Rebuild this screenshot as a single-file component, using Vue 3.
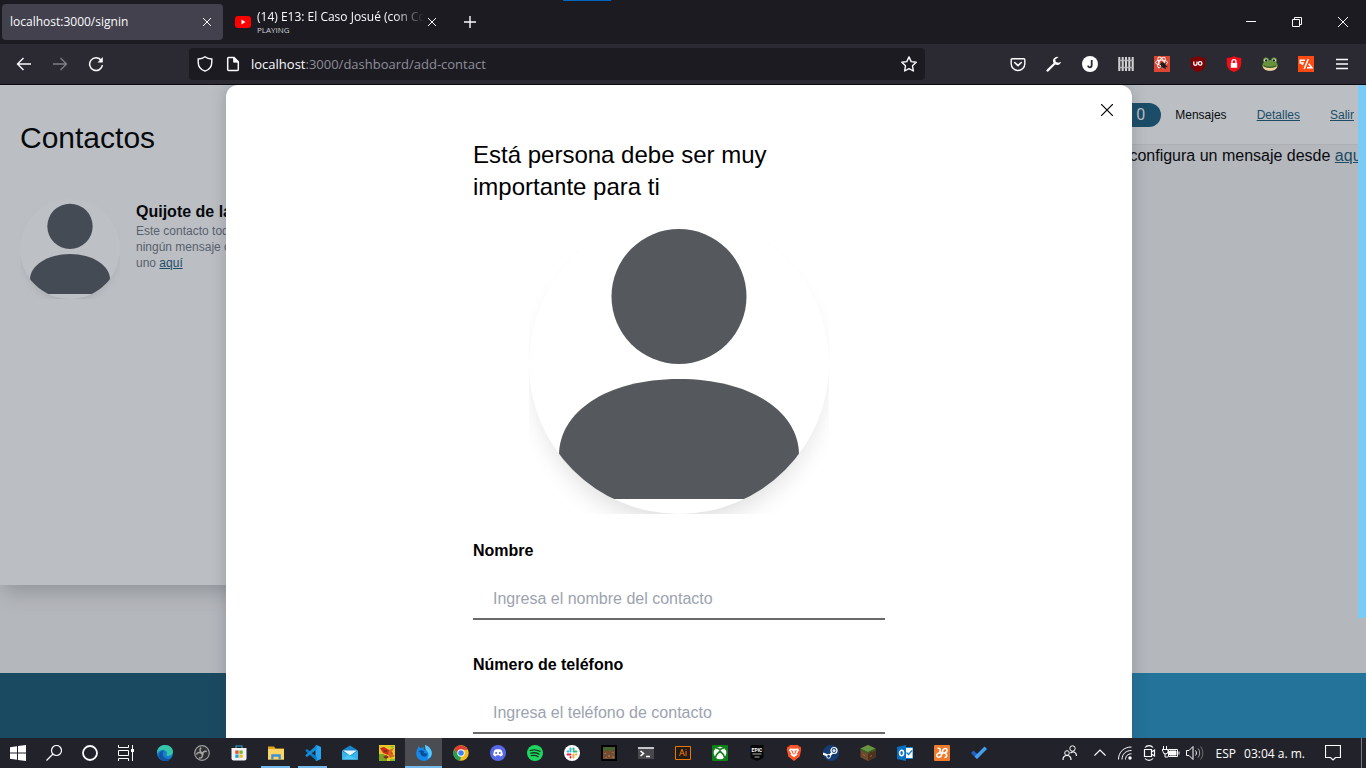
<script setup>
import { ref } from 'vue'

const contactName = ref('')
const contactPhone = ref('')
const address = ref('localhost:3000/dashboard/add-contact')

const extensions = [
  { name: 'Pocket', art: '<path d="M2.2 2.7h11.6a1 1 0 0 1 1 1v4a6.8 6.8 0 0 1-13.6 0v-4a1 1 0 0 1 1-1z" fill="none" stroke="#fbfbfe" stroke-width="1.4"/><path d="M4.7 6.5 8 9.6l3.3-3.1" fill="none" stroke="#fbfbfe" stroke-width="1.6" stroke-linecap="round" stroke-linejoin="round"/>' },
  { name: 'Herramientas', art: '<path d="M1.5 14.6 8.2 8" stroke="#fbfbfe" stroke-width="2.2" stroke-linecap="round"/><path d="M12.6 1.1a4.1 4.1 0 1 0 2.5 4.7l-2.5 1-2.7-.7-.7-2.5z" fill="#fbfbfe"/>' },
  { name: 'Perfil', art: '<circle cx="8" cy="8" r="8" fill="#fff"/><path d="M9.7 4v5.2c0 2.6-3.4 2.8-3.7.4" fill="none" stroke="#2b2a33" stroke-width="1.8"/>' },
  { name: 'Valla', art: '<path d="M1.3 1v14M4.7 1v14M8 1v14M11.3 1v14M14.7 1v14" stroke="#d4d4d7" stroke-width="2"/><path d="M0 4.5h16M0 11.500h16" stroke="#b4b4b8" stroke-width="1.400"/>' },
  { name: 'React Developer Tools', art: '<path fill="#dc4633" d="M0 0h16v16H0z"/><g fill="none" stroke="#fff" stroke-width=".9"><ellipse cx="7.5" cy="6.500" rx="6" ry="2.400"/><ellipse cx="7.500" cy="6.500" rx="6" ry="2.400" transform="rotate(60 7.500 6.500)"/><ellipse cx="7.500" cy="6.500" rx="6" ry="2.400" transform="rotate(120 7.500 6.500)"/></g><ellipse cx="9.400" cy="9.400" rx="2.300" ry="3.200" fill="#241a1a" transform="rotate(-35 9.400 9.400)"/><path d="m5.400 8 8 2.800M6.400 12l5.900-4.800M7.200 6.500l4.400 6.500" stroke="#241a1a"/>' },
  { name: 'uBlock', art: '<path d="M8 0C6 1.400 3.600 1.900.8 1.900v5.500c0 4.400 3.200 7.200 7.200 8.600 4-1.400 7.200-4.200 7.200-8.600V1.900C12.400 1.900 10 1.400 8 0z" fill="#800000"/><path d="M3.800 5.500v2.400c0 1.800 3.200 1.800 3.200 0V5.500" fill="none" stroke="#fff" stroke-width="1.300"/><circle cx="10.200" cy="7.400" r="1.800" fill="none" stroke="#fff" stroke-width="1.300"/>' },
  { name: 'Protección', art: '<path d="M8 0C6 1.400 3.600 1.900.8 1.900v5.500c0 4.400 3.200 7.200 7.200 8.600 4-1.400 7.200-4.200 7.200-8.600V1.900C12.400 1.900 10 1.400 8 0z" fill="#f00d18"/><rect x="4.800" y="7" width="6.400" height="4.800" rx=".6" fill="#fff"/><path d="M6 7.500V5.700a2 2 0 0 1 4 0v1.800" fill="none" stroke="#fff" stroke-width="1.300"/>' },
  { name: 'Rana', art: '<ellipse cx="8" cy="9.300" rx="7.700" ry="5.200" fill="#65933a"/><circle cx="4" cy="4.300" r="2.900" fill="#65933a"/><circle cx="12" cy="4.300" r="2.900" fill="#65933a"/><path d="M.7 10.200c3.200 2.400 11.400 2.400 14.600 0-.7 6.200-13.900 6.200-14.600 0z" fill="#f2d1a3"/><circle cx="4" cy="4.300" r="1.800" fill="#e9f5e5"/><circle cx="12" cy="4.300" r="1.800" fill="#e9f5e5"/><circle cx="4.200" cy="4.500" r="1.200" fill="#151a12"/><circle cx="11.800" cy="4.500" r="1.200" fill="#151a12"/><path d="M2 9.700c3 2.100 9 2.100 12 0" fill="none" stroke="#334f20"/>' },
  { name: 'Código', art: '<path fill="#ff4a12" d="M0 0h16v16H0z"/><path d="M7 4.300H2.300V7H5L4.200 9M10.300 3 6.200 13M9 11.700h4.800L10.700 7.800" fill="none" stroke="#fff" stroke-width="1.600"/>' }
]

const apps = [
  { name: 'Microsoft Edge', art: '<circle cx="8" cy="8" r="8" fill="#1680cf"/><path d="M.1 7C.6 2.700 4 .1 8.200.1c4.500 0 7.700 3 7.700 6.500 0 3-2.300 4.300-4.800 4.300-1.900 0-2.100-.9-1.400-1.700C10.700 7.600 9 5.100 6 5.100 3.300 5.100 1 6.500.1 9z" fill="#35c5a9"/><path d="M6.800 5.200C4.600 7.200 5.200 12.700 9.800 13.600c2 .3 3.600-.2 5-1.400C12 17.700 4.700 17.200 2 12.200 1 9.200 3.200 5.700 6.800 5.200z" fill="#1254a2"/>' },
  { name: 'OBS Studio', art: '<circle cx="8" cy="8" r="7.300" fill="#302f32" stroke="#9f9fa2" stroke-width="1.200"/><path d="M7.200 2.600c-2.500 2.200-.7 5 1.500 5.200M12.800 6.500c-3.200-1-4.700 1.700-3.900 4M5 13.100c2.900.1 4.600-1.800 2.700-4.500C6.200 6.700 3 7.300 2.600 9.600" fill="none" stroke="#a5a5a8" stroke-width="1.500"/>' },
  { name: 'Microsoft Store', art: '<path d="M5 3.500V1h6v2.500" fill="none" stroke="#2ea4ce" stroke-width="1.200"/><path d="M.5 3h15v10.500a2 2 0 0 1-2 2h-11a2 2 0 0 1-2-2z" fill="#f2f2f4"/><path fill="#e84b30" d="M4.300 5.500h3.300v3.300H4.300z"/><path fill="#75b82c" d="M8.400 5.500h3.300v3.300H8.400z"/><path fill="#219fd9" d="M4.300 9.500h3.300v3.300H4.300z"/><path fill="#f5b81c" d="M8.400 9.500h3.300v3.300H8.400z"/>' },
  { name: 'Explorador', state: 'open', art: '<path d="M0 1.500h6l1.500 2H16v11H0z" fill="#e3a51c"/><path d="M0 4h16v10.500H0z" fill="#fbd566"/><path d="M3.200 14.500V9.200h9.600v5.300h-2.300v-2.700h-5v2.700z" fill="#3e91d6"/>' },
  { name: 'Visual Studio Code', state: 'open', art: '<path d="m11.700 0 4.300 2v12l-4.300 2-1.200-.6V.6z" fill="#29a4ef"/><path d="M.6 5 2 4l9.800 8v3.900L.5 6z" fill="#087dca"/><path d="M.5 10 11.800.1V4.300L2 12 .6 11z" fill="#168dd8"/>' },
  { name: 'Correo', art: '<path d="m0 5.500 8-5 8 5v9H0z" fill="#1687ce"/><path d="M1 5.500h14L8 10.500z" fill="#e9f5fc"/><path d="m0 6 8 5 8-5v8.500H0z" fill="#36b5ed"/><path d="M0 14.500h16L6 9.800z" fill="#50c8f3"/>' },
  { name: 'Juego', art: '<path fill="#e5c928" d="M0 0h16v16H0z"/><path d="M0 9h5l3 4v3H0z" fill="#7ca526"/><path d="m1 3 4-1 5 3 4 3-2 3-8-3z" fill="#d3271e"/><path d="m10 5 5-2-3 5 4 3-5 2-2-4z" fill="#da6424"/><path d="m4 12 3-2 3 2-3 2zM5 5h3v2H5z" fill="#7d3515"/><path d="m11 1 5 0-3 2zM11 14h5v2h-5z" fill="#83bd2d"/>' },
  { name: 'Firefox', state: 'active', art: '<path d="M1.500 4 2.500 1l2 2.300L8 2l-.3 3 3-1C10.300 2 9 .8 9 .8c4 .8 7 4 6.800 7.800-.2 4.300-3.500 7.300-7.800 7.300S0 12.500.2 8.300C.3 6.500.7 5 1.500 4z" fill="#1688ea"/><path d="M9 0c4.500 1 7.800 5.800 6.500 10-.5 2-2.500 3.500-4.500 3.500C13.500 11 12.500 7.500 11 6.200 9.500 4.500 9 2.500 9 0z" fill="#55caff"/><path d="m4.300 7.500-2-1.200 3.300-1.200L8.500 6.500l-.8 1.500 3.800.7c-.8 4.700-7.300 3.300-7.200-1.200z" fill="#075094"/>' },
  { name: 'Google Chrome', art: '<circle cx="8" cy="8" r="7.700" fill="#f2bd1d"/><path d="M1.200 4A8 8 0 0 1 15 4.800H8L5 9.600z" fill="#df3e32"/><path d="M1.200 4 5 9.700l3 2-1.200 4A8 8 0 0 1 1.200 4z" fill="#259f56"/><circle cx="8" cy="8" r="3.700" fill="#fff"/><circle cx="8" cy="8" r="2.800" fill="#3b82eb"/>' },
  { name: 'Discord', art: '<circle cx="8" cy="8" r="8" fill="#5667e8"/><path d="m5.500 4.500 1.200-.2h2.600l1.200.2c1.500.7 2.200 3 2.300 5.500-.7.800-1.700 1.200-2.600 1.400l-.8-1.100H6.600l-.8 1.100c-.9-.2-1.900-.6-2.600-1.400.1-2.500.8-4.800 2.300-5.500z" fill="#fff"/><circle cx="6.200" cy="8" r="1" fill="#5667e8"/><circle cx="9.800" cy="8" r="1" fill="#5667e8"/>' },
  { name: 'Spotify', art: '<circle cx="8" cy="8" r="8" fill="#1ed760"/><path d="M3.200 5.500c3.300-1 6.900-.7 9.800.9M3.800 8.200c2.900-.8 5.700-.5 8.200.9M4.300 10.700c2.400-.5 4.600-.3 6.700.9" fill="none" stroke="#1b3525" stroke-width="1.300" stroke-linecap="round"/>' },
  { name: 'Slack', art: '<circle cx="8" cy="8" r="8" fill="#fff"/><g fill="none" stroke-width="2" stroke-linecap="round"><path d="M6.500 3.500v3" stroke="#36b8da"/><path d="M3.500 6.500h1" stroke="#36b8da"/><path d="M9.500 6.500h3M9.500 3.500v1" stroke="#2eb67d"/><path d="M9.500 9.500v3M12 9.500h.5" stroke="#ecb22e"/><path d="M3.500 9.500h3M6.500 12v.5" stroke="#df2457"/></g>' },
  { name: 'Minecraft', art: '<path fill="#000" d="M0 0h16v16H0z"/><path d="M2 2h12v12H2z" fill="#744c30"/><path d="M2 2h12v3h-2v1h-2V5H8v2H6V5H4v1H2z" fill="#47602c"/><path d="M3 8h2v1H3zm4 2h2v2H7zm4-3h2v1h-2zm-7 5h2v1H4zm7-1h2v2h-2z" fill="#94684a"/>' },
  { name: 'Terminal', art: '<path d="M0 2h16v12H0z" fill="#49494d"/><path d="M0 2h16v2H0z" fill="#c6c6ca"/><path d="m2.500 6 3 2.500-3 2.500M8 11.500h4" fill="none" stroke="#fff" stroke-width="1.600"/>' },
  { name: 'Illustrator', art: '<path d="M.5 1.500h15v13H.5z" fill="#261b13" stroke="#e7770c"/><text x="8" y="11.400" text-anchor="middle" font-family="Open Sans,sans-serif" font-size="9" fill="#ff8a0e">Ai</text>' },
  { name: 'Xbox', art: '<rect width="16" height="16" rx="1" fill="#108019"/><circle cx="8" cy="8" r="6.300" fill="#fff"/><path d="M4 3.400c1.300-.6 2.700.2 4 1.400 1.300-1.200 2.700-2 4-1.400M3.300 12.700C4.100 10 6.100 7.700 8 6.200c1.900 1.500 3.900 3.800 4.700 6.500" fill="none" stroke="#108019" stroke-width="1.700"/>' },
  { name: 'Epic Games', art: '<path d="M1.500 0h13v13L8 16l-6.500-3z" fill="#070708"/><text x="8" y="7" text-anchor="middle" font-family="Roboto,sans-serif" font-size="5" font-weight="700" fill="#fff">EPIC</text><path d="M3.500 9h9M5.500 12h5" stroke="#aaa"/>' },
  { name: 'Brave', art: '<path d="m4 0-1 1.500-1.700.2L.8 4.400l1.500 7L8 16l5.700-4.600 1.500-7-.5-2.700-1.700-.2L12 0z" fill="#fb542b"/><path d="m4.500 3.300-1.700 2 2.200 3-.4 1.400L8 12.300l3.400-2.600-.4-1.400 2.200-3-1.700-2-2 .5L8 3.400l-1.500.4z" fill="#fff"/><path d="m5 5.700 2 .7-.5 1.700L8 9.200l1.500-1.100L9 6.400l2-.7" fill="none" stroke="#fb542b"/>' },
  { name: 'Steam', art: '<circle cx="8" cy="8" r="8" fill="#153d72"/><path d="m0 8.500 6 2.700 4.700-5" fill="none" stroke="#fff" stroke-width="2.300"/><circle cx="11" cy="5.500" r="3" fill="#153d72" stroke="#fff" stroke-width="1.200"/><circle cx="11" cy="5.500" r="1.600" fill="#d9e5ef"/><circle cx="5.600" cy="11.300" r="1.900" fill="#153d72" stroke="#fff"/>' },
  { name: 'Minecraft Launcher', art: '<path d="m8 0 7.500 3.500v8.700L8 16 .5 12.200V3.500z" fill="#704a2d"/><path d="m8 0 7.500 3.500L8 7.200.5 3.500z" fill="#659442"/><path d="M8 7.200v8.800l7.500-3.800V3.500z" fill="#4e321f"/><path d="M.5 3.500 8 7.200l7.500-3.700v1.800l-2 1-1 1-1-1L8 9 6 7l-2 1-1-2-2.500-.7z" fill="#385f26"/><path d="m3 9 2 1v1L3 10zm7 2 2-1v1l-2 1z" fill="#986b46"/>' },
  { name: 'Outlook', art: '<path d="M7 3h9v10H7z" fill="#fff"/><path d="M8 2.500h8v11H8z" fill="none" stroke="#1681ce"/><path d="m9.500 7.500 2 2 3.500-4" fill="none" stroke="#1681ce" stroke-width="1.400"/><path d="m0 2 9-2v16l-9-2z" fill="#0871c2"/><ellipse cx="4.600" cy="8" rx="2" ry="2.700" fill="none" stroke="#fff" stroke-width="1.500"/>' },
  { name: 'XAMPP', art: '<rect width="16" height="16" rx="1" fill="#ef7b2d"/><path d="M3.500 3.500C6.500 2.500 7 5 5.500 8c-1.800 0-3 1-2.700 2.700.5 2.300 4 2 4.700-.7l1.200-4.500C9.500 2.800 13.500 3 13 5.700 12.700 7.300 11.500 8 10.200 8c3 .3 3.500 4.500.3 4.500M5.500 8h5" fill="none" stroke="#fff" stroke-width="1.600"/>' },
  { name: 'Tareas', art: '<path d="m0 8 2.500-2.500 6 5.800L6 14z" fill="#2064c8"/><path d="m6 14-2.500-2.500 10-10L16 4z" fill="#42a0ef"/>' }
]
</script>

<template>
  <div class="desktop">
    <header class="tabs">
      <span class="progress"></span>
      <div class="tab selected">
        <span class="tab-title">localhost:3000/signin</span>
        <button class="icon-button close" aria-label="Cerrar pestaña"><svg viewBox="0 0 8 8" width="8" height="8"><path d="m0 0 8 8m0-8L0 8" /></svg></button>
      </div>
      <div class="tab">
        <svg class="youtube" viewBox="0 0 16 12" width="16" height="12"><rect width="16" height="12" rx="3" fill="#f00" /><path d="m6.500 3.500 4 2.500-4 2.500z" fill="#fff" /></svg>
        <span class="tab-stack"><span class="tab-title fading">(14) E13: El Caso Josué (con Cok</span><small>PLAYING</small></span>
        <button class="icon-button close" aria-label="Cerrar pestaña"><svg viewBox="0 0 8 8" width="8" height="8"><path d="m0 0 8 8m0-8L0 8" /></svg></button>
      </div>
      <button class="icon-button new-tab" aria-label="Nueva pestaña"><svg viewBox="0 0 12 12" width="12" height="12"><path d="M6 0v12M0 6h12" stroke-width="1.400" /></svg></button>
      <div class="window-buttons">
        <button class="icon-button" aria-label="Minimizar"><svg viewBox="0 0 10 10" width="10" height="10"><path d="M0 4.500h10" /></svg></button>
        <button class="icon-button" aria-label="Restaurar"><svg viewBox="0 0 10 10" width="10" height="10"><path d="M.5 2.500h7v7h-7zM2.500 2.500v-2h7v7h-2" /></svg></button>
        <button class="icon-button" aria-label="Cerrar"><svg viewBox="0 0 10 10" width="10" height="10"><path d="m0 0 10 10m0-10L0 10" /></svg></button>
      </div>
    </header>

    <nav class="toolbar" aria-label="Navegación">
      <button class="icon-button tool" aria-label="Atrás"><svg viewBox="0 0 16 16" width="16" height="16"><path d="M15 8H1.500M7.500 2l-6 6 6 6" stroke-width="1.400" /></svg></button>
      <button class="icon-button tool muted" aria-label="Adelante"><svg viewBox="0 0 16 16" width="16" height="16"><path d="M1 8h13.500M8.500 2l6 6-6 6" stroke-width="1.400" /></svg></button>
      <button class="icon-button tool" aria-label="Recargar"><svg viewBox="0 0 16 16" width="16" height="16"><path d="M13.300 4.500A6.400 6.400 0 1 0 14.400 9" stroke-width="1.500" /><path d="M14.800 1v5.500H9.500z" fill="#fbfbfe" stroke="none" /></svg></button>
      <span class="spacer"></span>
      <div class="address">
        <svg viewBox="0 0 16 16" width="16" height="16"><path d="M8 .8C6 2.300 3.500 2.900 1.200 3v3.200c0 4.600 2.800 7.600 6.800 9 4-1.400 6.800-4.400 6.800-9V3C12.500 2.900 10 2.300 8 .8z" stroke-width="1.400" /></svg>
        <svg viewBox="0 0 16 16" width="16" height="16"><path d="M2.700 2.500a1 1 0 0 1 1-1H9l4.300 4.300v7.700a1 1 0 0 1-1 1H3.700a1 1 0 0 1-1-1zM9 1.500v4.300h4.300" stroke-width="1.500" /><path d="M9 1.500v4.300h4.300z" fill="#fbfbfe" /></svg>
        <a class="url" href="#" :title="address"><b>localhost</b>:3000/dashboard/add-contact</a>
        <button class="icon-button star" aria-label="Guardar marcador"><svg viewBox="0 0 16 16" width="16" height="16"><path d="m8 .9 2.200 4.700 5 .7-3.700 3.500.9 5.200L8 12.600 3.600 15l.9-5.200L.8 6.300l5-.7z" stroke-width="1.400" stroke-linejoin="round" /></svg></button>
      </div>
      <span class="spacer"></span>
      <button v-for="item in extensions" :key="item.name" class="icon-button tool" :aria-label="item.name"><svg class="art" viewBox="0 0 16 16" width="16" height="16" v-html="item.art"></svg></button>
      <button class="icon-button tool" aria-label="Menú"><svg viewBox="0 0 16 16" width="16" height="16"><path d="M2 3.500h12M2 8h12M2 12.500h12" stroke-width="1.300" /></svg></button>
    </nav>

    <div class="page">
      <div class="dashboard">
        <aside class="contacts">
          <h1>Contactos</h1>
          <article class="contact">
            <svg class="avatar dim" viewBox="0 0 300 300" aria-label="Avatar">
              <defs>
                <filter id="soft-small" x="-20%" y="-20%" width="140%" height="140%"><feGaussianBlur stdDeviation="12" /></filter>
                <clipPath id="round-small"><circle cx="150" cy="150" r="150" /></clipPath>
              </defs>
              <circle class="shade" cx="150" cy="166" r="142" filter="url(#soft-small)" />
              <circle class="disc" cx="150" cy="150" r="150" />
              <g class="person" clip-path="url(#round-small)"><circle cx="150" cy="82" r="68" /><path d="M30 241c0-42 54-76 120-76s120 34 120 76v44H30z" /></g>
            </svg>
            <div class="contact-text">
              <h2>Quijote de la Mancha</h2>
              <p>Este contacto todavía no tiene<br />ningún mensaje configurado,<br />uno <a href="#">aquí</a></p>
            </div>
          </article>
        </aside>
        <main>
          <div class="account">
            <span class="pill">0</span>
            <span>Mensajes</span>
            <a href="#">Detalles</a>
            <a href="#">Salir</a>
          </div>
          <p class="hint">configura un mensaje desde <a href="#">aquí</a></p>
        </main>
      </div>
      <footer></footer>
      <div class="overlay">
        <section class="modal" role="dialog" aria-labelledby="modal-title">
          <button class="dismiss" aria-label="Cerrar"><svg viewBox="0 0 12 12" width="12" height="12"><path d="m0 0 12 12m0-12L0 12" /></svg></button>
          <form @submit.prevent>
            <h2 id="modal-title">Está persona debe ser muy importante para ti</h2>
            <svg class="avatar" viewBox="0 0 300 300" aria-label="Avatar">
              <defs>
                <filter id="soft" x="-20%" y="-20%" width="140%" height="140%"><feGaussianBlur stdDeviation="12" /></filter>
                <clipPath id="round"><circle cx="150" cy="150" r="150" /></clipPath>
              </defs>
              <circle class="shade" cx="150" cy="166" r="142" filter="url(#soft)" />
              <circle class="disc" cx="150" cy="150" r="150" />
              <g class="person" clip-path="url(#round)"><circle cx="150" cy="82.500" r="67.500" /><path d="M30 241c0-42 46-76 120-76s120 34 120 76v44H30z" /></g>
            </svg>
            <div class="field"><label for="name">Nombre</label><input id="name" v-model="contactName" type="text" placeholder="Ingresa el nombre del contacto" /></div>
            <div class="field"><label for="phone">Número de teléfono</label><input id="phone" v-model="contactPhone" type="tel" placeholder="Ingresa el teléfono de contacto" /></div>
          </form>
        </section>
      </div>
      <span class="scroll-thumb"></span>
    </div>

    <footer class="taskbar">
      <div class="system">
        <button class="icon-button" aria-label="Inicio"><svg viewBox="0 0 16 16" width="16" height="16"><path d="M0 2.200 7 1.200v6.300H0zM8 1l8-1v7.500H8zM0 8.500h7v6.300l-7-1zM8 8.500h8V16l-8-1z" fill="#fff" stroke="none" /></svg></button>
        <button class="icon-button" aria-label="Buscar"><svg viewBox="0 0 16 16" width="16" height="16"><circle cx="10.500" cy="5.500" r="5" stroke-width="1.200" /><path d="m7 9-6.500 6.500" stroke-width="1.300" /></svg></button>
        <button class="icon-button" aria-label="Cortana"><svg viewBox="0 0 16 16" width="16" height="16"><circle cx="8" cy="8" r="7" stroke-width="1.800" /></svg></button>
        <button class="icon-button" aria-label="Vista de tareas"><svg viewBox="0 0 16 16" width="16" height="16"><path d="M.5 0v2.500h10V0M.5 5.500h10v5H.5zM.5 16v-2.500h10V16M14.500 0v16" /><path d="M13 4h3v3h-3z" fill="#fff" stroke="none" /></svg></button>
      </div>
      <div class="apps">
        <button v-for="app in apps" :key="app.name" class="icon-button" :class="app.state" :aria-label="app.name"><svg class="art" viewBox="0 0 16 16" width="16" height="16" v-html="app.art"></svg></button>
      </div>
      <div class="tray">
        <svg viewBox="0 0 16 16" width="16" height="16"><circle cx="10.500" cy="3.500" r="2.700" /><circle cx="5" cy="8" r="2.300" /><path d="M1 15c0-6 8-6 8 0M8.500 8c3-2.500 6-.5 6 3" stroke-width="1.200" /></svg>
        <svg class="chevron" viewBox="0 0 12 16" width="12" height="16"><path d="m.5 10.500 5.500-5.500 5.500 5.500" stroke-width="1.200" /></svg>
        <svg class="wifi" viewBox="0 0 14 16" width="14" height="16"><path d="M.5 14.500C.5 7 6 2 13.500 2M4 14.500c0-5.500 4-9 9.500-9M7.500 14.500c0-3.500 2.500-5.700 6-5.700" /><circle cx="12" cy="13" r="1.700" fill="#fff" stroke="none" /></svg>
        <svg viewBox="-1 0 14 16" width="14" height="16"><path d="M1.500 4.500h7v7h-7zM8.500 7l3-2v6l-3-2M2 2.500C4 0 8 0 10 2.500M2 13.500c2 2.500 6 2.500 8 0" stroke-width="1.200" /></svg>
        <svg viewBox="0 0 18 16" width="18" height="16"><path d="M6.500 4.500h9v7h-9zM17 6.500v3M1.500 1v3M4.500 1v3M0 4.500h6v2a2.500 2.500 0 0 1-5 0zM3 8v4h3" /><path d="M7.500 6h6.500v4H7.500z" fill="#fff" /></svg>
        <svg viewBox="0 0 18 16" width="18" height="16"><path d="M.5 5.500H3l4-4v13l-4-4H.5z" /><path d="M9.500 5.500c1.200 1.500 1.200 3.500 0 5" /><path d="M12 3.500c2.200 2.500 2.200 6.500 0 9" opacity=".6" /><path d="M14.500 1.500c3 3.500 3 9.500 0 13" opacity=".35" /></svg>
        <span class="language">ESP</span>
        <time>03:04 a. m.</time>
        <svg class="notices" viewBox="0 0 16 16" width="16" height="16"><path d="M.5.500h15v12h-5L8 15l-2.500-2.500h-5z" stroke-width="1.200" /></svg>
      </div>
    </footer>
  </div>
</template>

<style>
html, body { margin: 0; background: #1c1b22; }
</style>

<style scoped>
* { box-sizing: border-box; }
h1, h2, p { margin: 0; font-weight: 400; }
svg { display: block; flex: none; fill: none; stroke: #fbfbfe; overflow: hidden; }
.icon-button { display: flex; align-items: center; justify-content: center; flex: none; margin: 0; padding: 0; border: 0; background: none; }
.art { stroke: none; }
.desktop { display: flex; flex-direction: column; height: 100vh; overflow: hidden; font-family: "Liberation Sans", Arial, sans-serif; }

.tabs { position: relative; display: flex; flex: none; height: 44px; align-items: center; background: #1c1b22; color: #fbfbfe; font: 12px "Open Sans", sans-serif; }
.progress { position: absolute; top: 0; left: 41.2%; width: 48px; height: 1px; background: #0067c0; }
.tab { display: flex; align-items: center; width: 221px; height: 36px; margin-left: 2px; padding: 0 8px; border-radius: 4px; }
.tab + .tab { width: 223px; }
.tab.selected { background: #42414d; }
.tab-title { display: block; flex: 1; min-width: 0; overflow: hidden; white-space: nowrap; line-height: 16px; }
.tab-stack { flex: 1; min-width: 0; margin-left: 6px; }
.tab-stack small { display: block; font-size: 8px; line-height: 10px; color: #d0d0d5; }
.fading { mask-image: linear-gradient(90deg, #000 82%, transparent); }
.close { width: 16px; height: 16px; }
.youtube { margin-left: 2px; stroke: none; }
.new-tab { width: 44px; height: 36px; }
.window-buttons { display: flex; margin-left: auto; }
.window-buttons button { width: 46px; height: 44px; }

.toolbar { display: flex; flex: none; align-items: center; height: 41px; padding: 0 6px; background: #2b2a33; border-bottom: 1px solid #0c0c0f; }
.tool { width: 36px; height: 32px; }
.muted { opacity: .4; }
.spacer { flex: 75; }
.address { display: flex; flex: 720; align-items: center; gap: 12px; height: 32px; padding: 0 8px; border-radius: 4px; background: #1c1b22; }
.url { flex: 1; margin-left: -2px; overflow: hidden; color: #8f8f98; font: 13px/20px "Open Sans", sans-serif; text-decoration: none; white-space: nowrap; }
.url b { color: #fbfbfe; font-weight: 400; }

.page { position: relative; display: flex; flex: 1; flex-direction: column; min-height: 0; overflow: hidden; background: #b4b7bc; }
.dashboard { display: flex; flex: 1; min-height: 0; }
.contacts { flex: 0 0 25%; height: 500px; padding: 33px 20px; background: #bbbfc4; box-shadow: 0 10px 20px -4px #8f9297; overflow: hidden; clip-path: inset(0 0 -40px 0); }
h1 { font-size: 30px; line-height: 40px; color: #07090c; }
.contact { display: flex; gap: 16px; margin-top: 41px; }
.avatar { display: block; stroke: none; }
.contact .avatar { width: 100px; height: 100px; }
.shade { fill: #dedede; }
.disc { fill: #fff; }
.person { fill: #55585d; }
.dim .shade { fill: #a8acb1; }
.dim .disc { fill: #bdc0c5; }
.dim .person { fill: #444b54; }
.contact-text { padding-top: 3px; white-space: nowrap; }
.contact-text h2 { font-size: 16px; line-height: 20px; font-weight: 700; color: #07090c; }
.contact-text p { padding-top: 1px; font-size: 12px; line-height: 16px; color: #59606c; }
.contact-text a, .account a, .hint a { color: #1c4c66; }
main { display: flex; flex: 1; flex-direction: column; min-width: 0; }
.account { display: flex; align-items: center; justify-content: flex-end; height: 60px; padding: 0 12px 0 0; gap: 30px; font-size: 12px; background: #bbbfc4; border-bottom: 1px solid #adb0b5; color: #090a0e; }
.pill { display: flex; align-items: center; justify-content: flex-end; width: 80px; height: 24px; margin-right: -16px; padding-right: 16px; border-radius: 12px; background: #1b4d68; color: #bbbfc4; font: 16px Roboto, sans-serif; }
.hint { padding-top: 1px; font-size: 16px; line-height: 20px; text-align: right; color: #090a0e; }
.page > footer { flex: none; height: 65px; background: linear-gradient(90deg, #1a4a61 50%, #24739a 50%); }
.overlay { position: absolute; inset: 0 8px 0 0; display: flex; justify-content: center; }
.modal { position: relative; width: 66.7%; height: 800px; padding-top: 54px; background: #fff; border-radius: 12px 12px 0 0; box-shadow: 0 0 16px rgba(50, 56, 65, .25); }
.dismiss { position: absolute; top: 19px; right: 19px; margin: 0; padding: 0; border: 0; background: none; }
.dismiss svg { stroke: #000; stroke-width: 1.200; }
form { width: 412px; margin: 0 auto; }
form h2 { font-size: 24px; line-height: 32px; color: #000; }
form .avatar { width: 300px; height: 300px; margin: 11px auto 27px; }
.field { margin-bottom: 35px; }
label { display: block; font-size: 16px; line-height: 20px; font-weight: 700; color: #000; }
input { display: block; width: 100%; height: 44px; margin-top: 15px; padding: 4px 20px 0; border: 0; border-bottom: 2px solid #69696d; border-radius: 0; outline: 0; background: none; font: 16px "Liberation Sans", Arial, sans-serif; }
input::placeholder { color: #9ca3af; opacity: 1; }
.scroll-thumb { position: absolute; top: 0; right: 0; width: 8px; height: 533px; background: #7acbf5; }

.taskbar { display: flex; flex: none; height: 30px; background: #22232a; color: #fff; }
.system, .apps { display: flex; }
.system button { width: 36px; }
.apps { margin-left: 2px; }
.apps button { width: 37px; border-bottom: 2px solid transparent; border-top: 2px solid transparent; }
.apps .open { position: relative; }
.apps .open::after { content: ""; position: absolute; right: 4px; bottom: -2px; left: 4px; height: 2px; background: #76b9ed; }
.apps .active { border-bottom-color: #76b9ed; background: #4b4d53; border-top-color: #4b4d53; }
.tray { display: flex; align-items: center; gap: 6px; margin-left: auto; margin-right: 4px; padding-right: 20px; border-right: 1px solid #777880; font: 12px "Open Sans", sans-serif; }
.chevron { margin: 0 6px 0 10px; }
.wifi { margin-right: 4px; }
.language { margin-left: 6px; }
time { margin: 0 14px 0 2px; }
</style>
